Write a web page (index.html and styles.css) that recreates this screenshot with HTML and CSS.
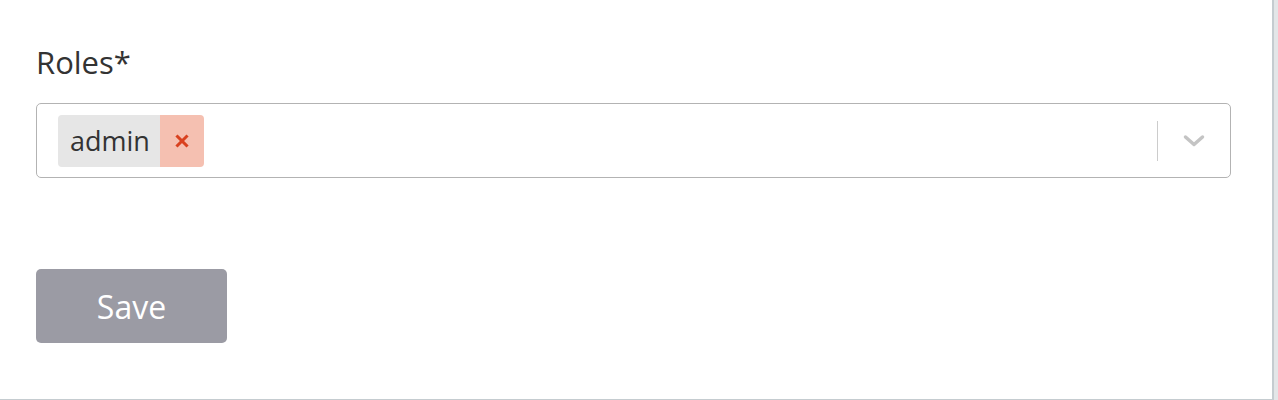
FILE: index.html
```html
<!DOCTYPE html>
<html lang="en">
<head>
    <meta charset="UTF-8">
    <title>Roles</title>
    <link rel="stylesheet" href="styles.css">
</head>
<body>
    <div class="page">
        <form class="role-form">
            <label class="field-label">Roles*</label>
            <div class="select-box">
                <div class="select-values">
                    <div class="chip">
                        <span class="chip-label">admin</span>
                        <span class="chip-remove">
                            <svg width="14" height="14" viewBox="0 0 14 14" fill="none" stroke="currentColor" stroke-width="3" stroke-linecap="square">
                                <line x1="2.5" y1="2.5" x2="11.5" y2="11.5"></line>
                                <line x1="11.5" y1="2.5" x2="2.5" y2="11.5"></line>
                            </svg>
                        </span>
                    </div>
                </div>
                <div class="select-indicators">
                    <span class="separator"></span>
                    <span class="dropdown">
                        <svg width="22" height="14" viewBox="0 0 22 14" fill="none" stroke="currentColor" stroke-width="3.5" stroke-linecap="round" stroke-linejoin="round">
                            <polyline points="2.5,3 11,10.5 19.5,3"></polyline>
                        </svg>
                    </span>
                </div>
            </div>
            <button type="button" class="save-button">Save</button>
        </form>
    </div>
</body>
</html>
```

FILE: styles.css
```css
:root {
    --text-color: #333333;
    --border-color: #b3b3b3;
    --chip-color: #e6e6e6;
    --remove-bg: #f5c0b1;
    --remove-color: #d9411f;
    --button-color: #9b9ba4;
    --frame-color: #c5ccd0;
}

html {
    background-color: #e3e6e8;
}

body {
    font-family: "Open Sans", Lato, sans-serif;
    margin: 0;
    padding: 0;
    color: var(--text-color);
}

.page {
    width: 1272px;
    height: 399px;
    background-color: #ffffff;
    border-right: 2px solid var(--frame-color);
    border-bottom: 1px solid var(--frame-color);
}

.role-form {
    display: flex;
    flex-direction: column;
    align-items: flex-start;
    padding: 42px 41px 0 36px;
}

.field-label {
    font-size: 31px;
    line-height: 40px;
    margin-bottom: 21px;
}

.select-box {
    align-self: stretch;
    box-sizing: border-box;
    height: 75px;
    border: 1px solid var(--border-color);
    border-radius: 5px;
    display: flex;
    align-items: center;
}

.select-values {
    flex: 1;
    display: flex;
    padding-left: 21px;
}

.chip {
    display: flex;
    height: 52px;
    border-radius: 4px;
    overflow: hidden;
}

.chip-label {
    display: flex;
    align-items: center;
    width: 102px;
    box-sizing: border-box;
    padding-left: 12px;
    background-color: var(--chip-color);
    font-size: 27px;
}

.chip-remove {
    width: 44px;
    display: flex;
    align-items: center;
    justify-content: center;
    background-color: var(--remove-bg);
    color: var(--remove-color);
}

.select-indicators {
    display: flex;
    align-items: center;
}

.separator {
    width: 1px;
    height: 40px;
    background-color: #cccccc;
}

.dropdown {
    width: 72px;
    display: flex;
    justify-content: center;
    color: #c4c4c4;
}

.save-button {
    margin-top: 91px;
    width: 191px;
    height: 74px;
    border: none;
    border-radius: 5px;
    background-color: var(--button-color);
    color: #ffffff;
    font-family: inherit;
    font-size: 32px;
    padding: 0;
}
```
